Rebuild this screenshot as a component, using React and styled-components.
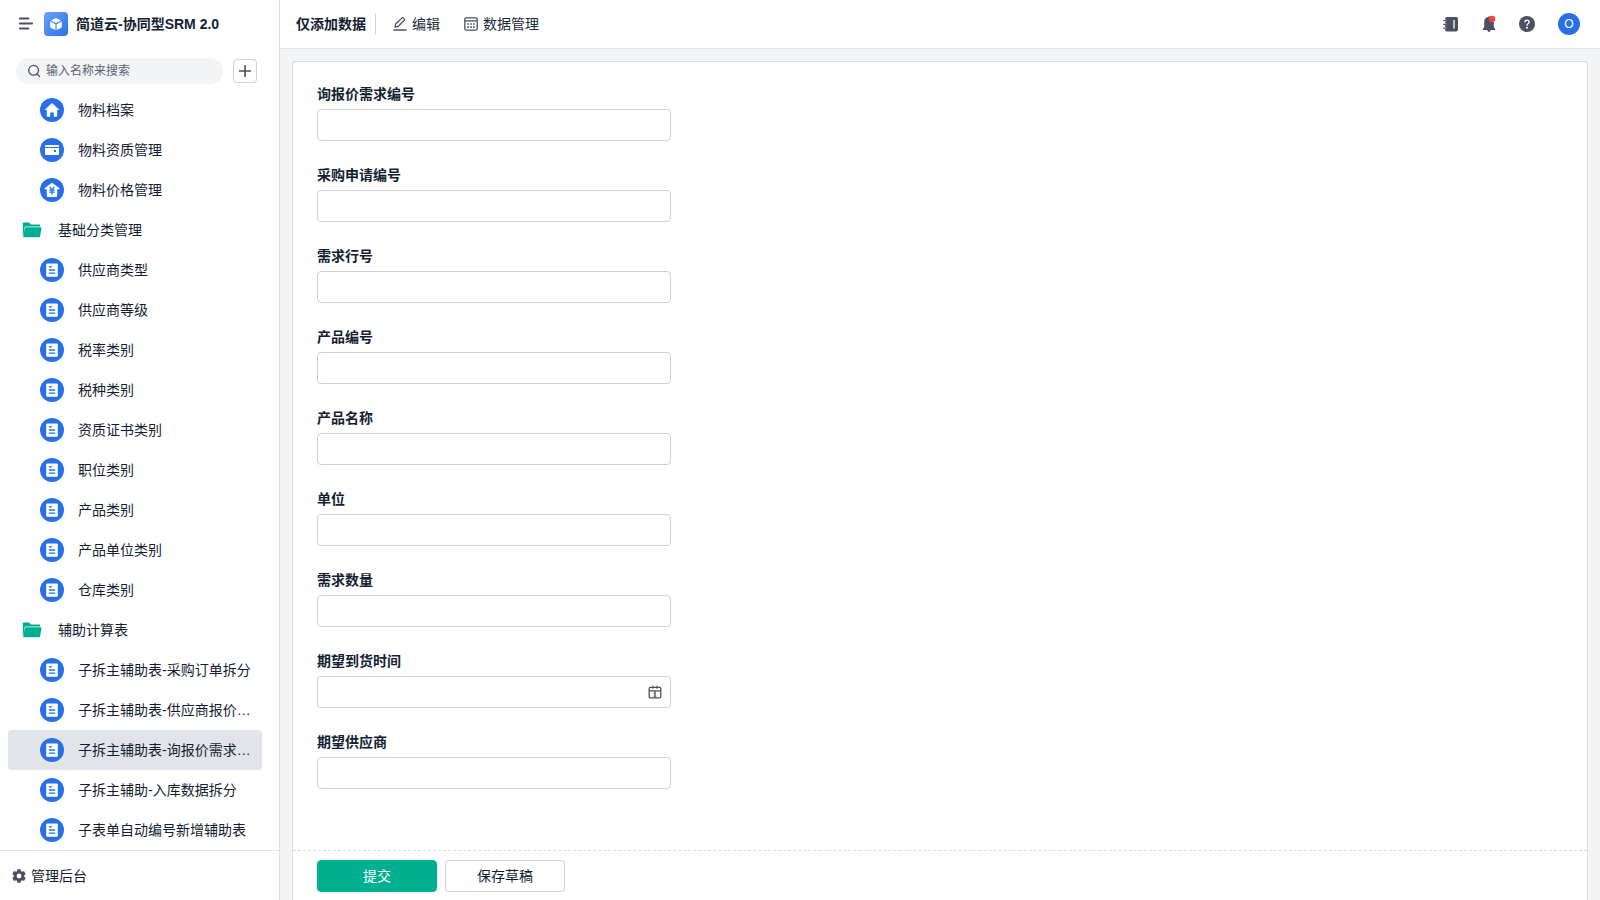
import React from 'react';
import styled, { createGlobalStyle } from 'styled-components';

const GlobalStyle = createGlobalStyle`
  :root {
    --text: #141e31;
    --icon: #4b5160;
    --blue: #2970e8;
    --green: #00b090;
    --line: #e0e2e5;
    --field-line: #d0d1d4;
    --page: #f3f4f6;
  }

  * {
    box-sizing: border-box;
  }

  body {
    margin: 0;
    background: var(--page);
    color: var(--text);
    font-family: 'Liberation Sans', 'Noto Sans CJK SC', sans-serif;
    font-size: 14px;
    line-height: 20px;
  }

  button,
  input {
    font: inherit;
    color: inherit;
  }

  button {
    cursor: pointer;
  }

  svg {
    display: block;
    flex: none;
  }
`;

const Page = styled.div`
  display: flex;
  height: 100vh;
`;

const Sidebar = styled.aside`
  display: flex;
  flex-direction: column;
  flex: none;
  width: 280px;
  background: #fff;
  border-right: 1px solid #dcdee2;
`;

const SidebarHeader = styled.div`
  display: flex;
  align-items: center;
  height: 48px;
  padding-left: 18px;
`;

const IconButton = styled.button`
  display: flex;
  align-items: center;
  justify-content: center;
  padding: 0;
  border: 0;
  background: none;
  color: var(--icon);
`;

const AppLogo = styled.span`
  display: flex;
  align-items: center;
  justify-content: center;
  width: 24px;
  height: 24px;
  margin: 0 8px 0 10px;
  border-radius: 4px;
  background: linear-gradient(135deg, #6da2f7, #2970e8);
`;

const AppTitle = styled.h1`
  margin: 0;
  font-size: 14px;
  font-weight: 700;
`;

const SearchRow = styled.div`
  display: flex;
  align-items: center;
  gap: 10px;
  padding: 10px 22px 6px 16px;
`;

const SearchBox = styled.label`
  display: flex;
  align-items: center;
  flex: 1;
  gap: 6px;
  min-width: 0;
  height: 26px;
  padding: 0 12px;
  border-radius: 13px;
  background: var(--page);
  color: var(--icon);
`;

const SearchInput = styled.input`
  flex: 1;
  min-width: 0;
  padding: 0;
  border: 0;
  outline: 0;
  background: none;
  font-size: 12px;

  &::placeholder {
    color: #5c6270;
    opacity: 1;
  }
`;

const AddButton = styled(IconButton)`
  width: 24px;
  height: 24px;
  border: 1px solid var(--field-line);
  border-radius: 4px;
`;

const Menu = styled.nav`
  flex: 1;
  min-height: 0;
  padding: 0 17px 0 8px;
  overflow: hidden;

  ul {
    margin: 0;
    padding: 0;
    list-style: none;
  }
`;

const MenuLink = styled.a`
  display: flex;
  align-items: center;
  gap: ${({ $folder }) => ($folder ? '16px' : '14px')};
  height: 40px;
  padding: 0 8px 0 ${({ $folder }) => ($folder ? '14px' : '32px')};
  border-radius: 4px;
  background: ${({ $active }) => ($active ? '#e1e4e9' : 'transparent')};
  color: inherit;
  text-decoration: none;
  white-space: nowrap;
`;

const RoundIcon = styled.span`
  flex: none;
  width: 24px;
  height: 24px;
  border-radius: 50%;
  background: var(--blue);
  color: #fff;
`;

const SidebarFooter = styled.a`
  display: flex;
  align-items: center;
  gap: 5px;
  height: 50px;
  padding-left: 12px;
  border-top: 1px solid var(--line);
  color: inherit;
  text-decoration: none;

  svg {
    color: var(--icon);
  }
`;

const Main = styled.main`
  display: flex;
  flex-direction: column;
  flex: 1;
  min-width: 0;
`;

const Toolbar = styled.header`
  display: flex;
  align-items: center;
  height: 49px;
  padding: 0 20px 0 16px;
  border-bottom: 1px solid #e4e6ea;
  background: #fff;
`;

const TabTitle = styled.h2`
  margin: 0;
  padding-right: 9px;
  border-right: 1px solid #d0d2d6;
  font-size: 14px;
  font-weight: 700;
`;

const ToolbarActions = styled.div`
  display: flex;
  gap: 24px;
  padding-left: 17px;
`;

const ToolbarButton = styled(IconButton)`
  gap: 5px;

  span {
    color: #222b3d;
  }
`;

const ToolbarIcons = styled.div`
  display: flex;
  align-items: center;
  gap: 22px;
  margin: 0 23px 0 auto;
`;

const Avatar = styled.button`
  width: 22px;
  height: 22px;
  padding: 0;
  border: 0;
  border-radius: 50%;
  background: var(--blue);
  color: #fff;
  font-size: 12px;
`;

const Card = styled.form`
  display: flex;
  flex-direction: column;
  flex: 1;
  min-height: 0;
  margin: 12px 12px 0;
  border: 1px solid #dcdee1;
  border-bottom: 0;
  border-radius: 4px 4px 0 0;
  background: #fff;
`;

const Fields = styled.div`
  display: flex;
  flex-direction: column;
  flex: 1;
  gap: 24px;
  min-height: 0;
  padding: 22px 24px;
  overflow: hidden;
`;

const Field = styled.div`
  display: flex;
  flex-direction: column;
  gap: 5px;
  width: 100%;
  max-width: 354px;

  label {
    font-weight: 700;
  }
`;

const InputBox = styled.div`
  display: flex;
  align-items: center;
  height: 32px;
  padding: 0 8px;
  border: 1px solid var(--field-line);
  border-radius: 4px;
  background: #fff;

  &:focus-within {
    border-color: var(--green);
  }

  input {
    flex: 1;
    min-width: 0;
    padding: 0;
    border: 0;
    outline: 0;
    background: none;
  }
`;

const CardFooter = styled.div`
  display: flex;
  gap: 8px;
  height: 50px;
  padding: 9px 24px;
  border-top: 1px dashed #dadcdf;
`;

const Button = styled.button`
  width: 120px;
  height: 32px;
  padding: 0;
  border: 1px solid ${({ $primary }) => ($primary ? 'var(--green)' : 'var(--field-line)')};
  border-radius: 4px;
  background: ${({ $primary }) => ($primary ? 'var(--green)' : '#fff')};
  color: ${({ $primary }) => ($primary ? '#fff' : 'var(--text)')};
`;

const MenuFoldIcon = () => (
  <svg width="16" height="16" viewBox="0 0 16 16" stroke="currentColor" strokeWidth="1.8" strokeLinecap="round">
    <path d="M1.8 2.5h8.6M1.8 7.5h12.4M1.8 12.5h8.6" />
  </svg>
);

const CubeIcon = () => (
  <svg width="14" height="14" viewBox="0 0 14 14" fill="#fff">
    <path d="M7 .9 12 3.5 7 6.1 2 3.5z" />
    <path d="M1.2 4.5 6.4 7.2v5.9L2 10.9q-.8-.4-.8-1.3z" />
    <path d="M12.8 4.5 7.6 7.2v5.9l4.4-2.2q.8-.4.8-1.3z" />
  </svg>
);

const SearchIcon = () => (
  <svg width="12" height="14" viewBox="0 0 12 14" fill="none" stroke="currentColor" strokeWidth="1.3" strokeLinecap="round">
    <circle cx="5.6" cy="6.3" r="4.9" />
    <path d="m9.2 10 2.4 2.5" />
  </svg>
);

const PlusIcon = () => (
  <svg width="14" height="14" viewBox="0 0 14 14" stroke="currentColor" strokeWidth="1.6">
    <path d="M7 1v12M1 7h12" />
  </svg>
);

const HomeIcon = () => (
  <svg width="24" height="24" viewBox="0 0 24 24" fill="currentColor">
    <path d="M11.4 5.4q.6-.5 1.2 0l6.1 5.8q.6.8-.4.9h-1.1V18q0 .8-.8.8h-2.6v-4.4h-3.6v4.4H7.6q-.8 0-.8-.8v-5.9H5.7q-1-.1-.4-.9z" />
  </svg>
);

const WalletIcon = () => (
  <svg width="24" height="24" viewBox="0 0 24 24" fill="currentColor">
    <path d="M6 7h12q1 0 1 1v1H5V8q0-1 1-1z" />
    <path d="M5 10h14v6q0 1-1 1H6q-1 0-1-1zm9 2v2h2v-2z" fillRule="evenodd" />
  </svg>
);

const PriceIcon = () => (
  <svg width="24" height="24" viewBox="0 0 24 24">
    <path d="M12 4.7 19.2 10v1.3h-2V18q0 .9-.9.9H7.7q-.9 0-.9-.9v-6.7h-2V10z" fill="currentColor" />
    <path
      d="m9.7 8.9 2.3 3 2.3-3M9.3 12.1h5.4M9.3 14.2h5.4M12 11.9v4.8"
      fill="none"
      stroke="var(--blue)"
      strokeWidth="1.2"
    />
  </svg>
);

const FormIcon = () => (
  <svg width="24" height="24" viewBox="0 0 24 24">
    <rect x="6.2" y="5.4" width="11.6" height="13.4" rx=".8" fill="currentColor" />
    <path d="M8.8 8.8h3.2M8.8 12h6.4M8.8 15.2h6.4" stroke="var(--blue)" strokeWidth="1.3" />
  </svg>
);

const FolderIcon = () => (
  <svg width="20" height="16" viewBox="0 0 20 16">
    <path d="M1.6.5H7l1.8 1.900h8.400q1 0 1 1v1H3.900q-1.300 0-1.500 1.200L1.400 14Q.8 13.800.8 13V1.400q0-.9.8-.9z" fill="#00a98a" />
    <path d="M3.7 5.300h15q1 0 .8 1l-1.500 8.100q-.2.900-1.100.9H2q-.9 0-.7-.9l1.400-8.200q.1-.9 1-.9z" fill="#00b090" />
  </svg>
);

const GearIcon = () => (
  <svg width="14" height="16" viewBox="0 0 14 16">
    <path
      d="M5.4 1.2h3.2l.5 2 .9.5 2-.6 1.6 2.8-1.5 1.5v1.2l1.5 1.5-1.6 2.8-2-.6-.9.5-.5 2H5.4l-.5-2-.9-.5-2 .6-1.6-2.8 1.5-1.5V7.4L.4 5.9 2 3.1l2 .6.9-.5zM7 5.6a2.400 2.400 0 1 0 0 4.800 2.400 2.400 0 0 0 0-4.800z"
      fill="currentColor"
      fillRule="evenodd"
    />
  </svg>
);

const EditIcon = () => (
  <svg width="14" height="14" viewBox="0 0 14 14" fill="none" stroke="currentColor" strokeWidth="1.3" strokeLinejoin="round" strokeLinecap="round">
    <path d="m2 10.2.7-3.2L9 .9q.6-.5 1.1 0l1.200 1.200q.5.500 0 1.100L5.100 9.500z" />
    <path d="M.9 13h12.2" />
  </svg>
);

const TableIcon = () => (
  <svg width="14" height="14" viewBox="0 0 14 14" fill="none" stroke="currentColor" strokeWidth="1.3">
    <rect x=".8" y=".8" width="12.4" height="12.4" rx="1.5" />
    <path d="M1 3.9h12" />
    <path d="M3.300 7h1.600M6.200 7h1.600M9.100 7h1.600M3.300 10.100h1.600M6.200 10.100h1.600M9.100 10.100h1.600" strokeWidth="1.6" />
  </svg>
);

const NotebookIcon = () => (
  <svg width="16" height="16" viewBox="0 0 16 16">
    <rect x="2" y="1" width="13" height="14.6" rx="2" fill="currentColor" />
    <path d="M0 4.5h3.2M0 8.3h3.2M0 12.1h3.2" stroke="#fff" strokeWidth="2" />
    <path d="M.2 4.5h3M.2 8.3h3M.2 12.1h3" stroke="currentColor" strokeWidth="1.2" />
    <path d="M11 4v8.5" stroke="#fff" strokeWidth="1.3" />
  </svg>
);

const BellIcon = () => (
  <svg width="16" height="18" viewBox="0 0 16 18">
    <path
      d="M7.2 2q0-.8.8-.8t.8.8q4 .7 4 5v5.100l1.300 1.700v1.100H9.800Q9.400 17 8 17t-1.800-2.100H1.900v-1.100l1.300-1.700V7q0-4.300 4-5z"
      fill="currentColor"
    />
    <circle cx="11" cy="4" r="3.3" fill="#f04444" />
  </svg>
);

const HelpIcon = () => (
  <svg width="16" height="16" viewBox="0 0 16 16">
    <circle cx="8" cy="8" r="8" fill="currentColor" />
    <path d="M5.9 6.3q0-2.2 2.1-2.2t2.1 1.9q0 1-1.1 1.800T8 9.700" fill="none" stroke="#fff" strokeWidth="1.4" />
    <circle cx="8" cy="11.8" r="1" fill="#fff" />
  </svg>
);

const CalendarIcon = () => (
  <svg width="14" height="14" viewBox="0 0 14 14" fill="none" stroke="currentColor" strokeWidth="1.3">
    <rect x="1.2" y="2.3" width="11.6" height="10.5" rx="1.2" />
    <path d="M1.2 5.800h11.600M4.900.8v3M9.100.8v3M7 6v6.500" />
    <path d="M5.300 8.200H7M5.500 11.200h3" strokeWidth=".7" />
  </svg>
);

const menuIcons = {
  home: HomeIcon,
  wallet: WalletIcon,
  price: PriceIcon,
  form: FormIcon,
};

const menuItems = [
  { label: '物料档案', icon: 'home' },
  { label: '物料资质管理', icon: 'wallet' },
  { label: '物料价格管理', icon: 'price' },
  { label: '基础分类管理', folder: true },
  { label: '供应商类型' },
  { label: '供应商等级' },
  { label: '税率类别' },
  { label: '税种类别' },
  { label: '资质证书类别' },
  { label: '职位类别' },
  { label: '产品类别' },
  { label: '产品单位类别' },
  { label: '仓库类别' },
  { label: '辅助计算表', folder: true },
  { label: '子拆主辅助表-采购订单拆分' },
  { label: '子拆主辅助表-供应商报价…' },
  { label: '子拆主辅助表-询报价需求…', active: true },
  { label: '子拆主辅助-入库数据拆分' },
  { label: '子表单自动编号新增辅助表' },
];

const fields = [
  { id: 'inquiryNo', label: '询报价需求编号' },
  { id: 'purchaseNo', label: '采购申请编号' },
  { id: 'lineNo', label: '需求行号' },
  { id: 'productNo', label: '产品编号' },
  { id: 'productName', label: '产品名称' },
  { id: 'unit', label: '单位' },
  { id: 'quantity', label: '需求数量' },
  { id: 'arrivalTime', label: '期望到货时间', date: true },
  { id: 'supplier', label: '期望供应商' },
];

const MenuItem = ({ item }) => {
  const Icon = menuIcons[item.icon || 'form'];

  return (
    <li>
      <MenuLink href="#" $folder={item.folder} $active={item.active} aria-current={item.active ? 'page' : undefined}>
        {item.folder ? <FolderIcon /> : <RoundIcon><Icon /></RoundIcon>}
        <span>{item.label}</span>
      </MenuLink>
    </li>
  );
};

const App = () => {
  return (
    <>
      <GlobalStyle />
      <Page>
        <Sidebar>
          <SidebarHeader>
            <IconButton type="button" aria-label="收起菜单"><MenuFoldIcon /></IconButton>
            <AppLogo><CubeIcon /></AppLogo>
            <AppTitle>简道云-协同型SRM 2.0</AppTitle>
          </SidebarHeader>

          <SearchRow>
            <SearchBox>
              <SearchIcon />
              <SearchInput type="text" placeholder="输入名称来搜索" aria-label="搜索" />
            </SearchBox>
            <AddButton type="button" aria-label="新建"><PlusIcon /></AddButton>
          </SearchRow>

          <Menu>
            <ul>
              {menuItems.map((item) => (
                <MenuItem key={item.label} item={item} />
              ))}
            </ul>
          </Menu>

          <SidebarFooter href="#">
            <GearIcon />
            <span>管理后台</span>
          </SidebarFooter>
        </Sidebar>

        <Main>
          <Toolbar>
            <TabTitle>仅添加数据</TabTitle>
            <ToolbarActions>
              <ToolbarButton type="button"><EditIcon /><span>编辑</span></ToolbarButton>
              <ToolbarButton type="button"><TableIcon /><span>数据管理</span></ToolbarButton>
            </ToolbarActions>
            <ToolbarIcons>
              <IconButton type="button" aria-label="通讯录"><NotebookIcon /></IconButton>
              <IconButton type="button" aria-label="消息"><BellIcon /></IconButton>
              <IconButton type="button" aria-label="帮助"><HelpIcon /></IconButton>
            </ToolbarIcons>
            <Avatar type="button">O</Avatar>
          </Toolbar>

          <Card onSubmit={(e) => e.preventDefault()}>
            <Fields>
              {fields.map((field) => (
                <Field key={field.id}>
                  <label htmlFor={field.id}>{field.label}</label>
                  <InputBox>
                    <input id={field.id} type="text" />
                    {field.date && (
                      <IconButton type="button" aria-label="选择日期"><CalendarIcon /></IconButton>
                    )}
                  </InputBox>
                </Field>
              ))}
            </Fields>

            <CardFooter>
              <Button type="submit" $primary>提交</Button>
              <Button type="button">保存草稿</Button>
            </CardFooter>
          </Card>
        </Main>
      </Page>
    </>
  );
};

export default App;
